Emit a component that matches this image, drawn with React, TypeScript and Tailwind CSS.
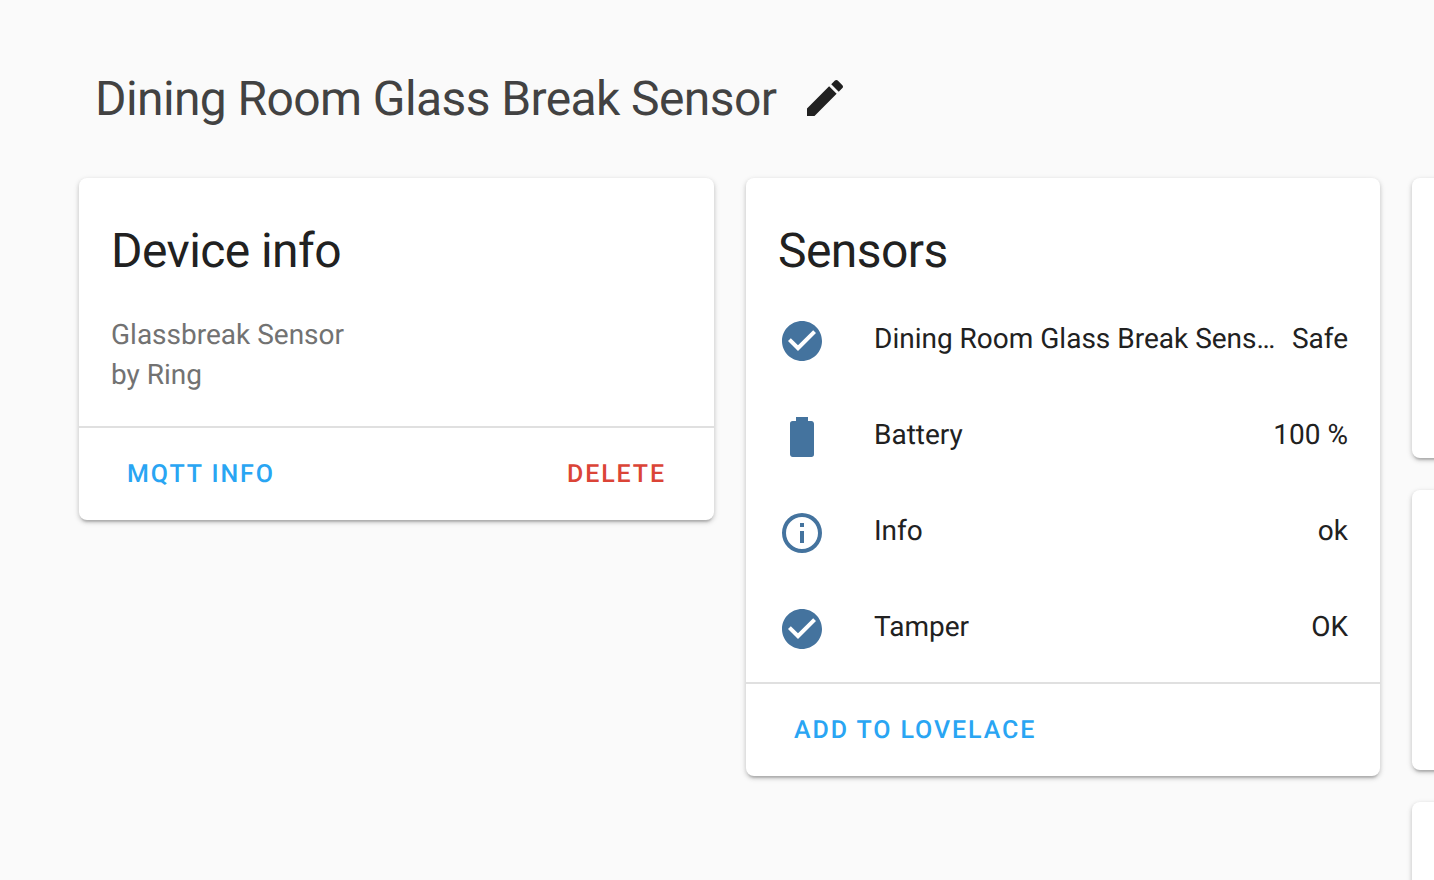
const CHECK = "M12 2C6.5 2 2 6.5 2 12S6.5 22 12 22 22 17.5 22 12 17.5 2 12 2M10 17L5 12L6.41 10.59L10 14.17L17.59 6.58L19 8L10 17Z";
const BATTERY = "M16.67,4H15V2H9V4H7.33A1.33,1.33 0 0,0 6,5.33V20.67C6,21.4 6.6,22 7.33,22H16.67A1.33,1.33 0 0,0 18,20.67V5.33C18,4.6 17.4,4 16.67,4Z";
const INFO = "M11,9H13V7H11V9M12,20C7.59,20 4,16.41 4,12C4,7.59 7.59,4 12,4C16.41,4 20,7.59 20,12C20,16.41 16.41,20 12,20M12,2A10,10 0 0,0 2,12A10,10 0 0,0 12,22A10,10 0 0,0 22,12A10,10 0 0,0 12,2M11,17H13V11H11V17Z";
const PENCIL = "M20.71,7.04C21.1,6.65 21.1,6 20.71,5.63L18.37,3.29C18,2.9 17.35,2.9 16.96,3.29L15.12,5.12L18.87,8.87M3,17.25V21H6.75L17.81,9.93L14.06,6.18L3,17.25Z";

const cardClass = "bg-white rounded-lg shadow-[0_4px_2px_-2px_rgba(0,0,0,0.14),0_2px_4px_0_rgba(0,0,0,0.14),0_2px_6px_0_rgba(0,0,0,0.12)] shrink-0";

function Icon({ d, className }: { d: string; className: string }) {
  return (
    <svg viewBox="0 0 24 24" className={className} fill="currentColor">
      <path d={d} />
    </svg>
  );
}

function Row({ icon, name, value }: { icon: string; name: string; value: string }) {
  return (
    <div className="flex items-center h-24 pl-8 pr-8">
      <Icon d={icon} className="w-12 h-12 shrink-0 text-[#44739e] mt-1" />
      <div className="flex-1 min-w-0 ml-12 truncate text-[28px] leading-10 text-[#212121] pr-4">{name}</div>
      <div className="shrink-0 text-[28px] leading-10 text-[#212121]">{value}</div>
    </div>
  );
}

function Action({ color, children }: { color: string; children: string }) {
  return <span className={`text-[25px] font-medium tracking-[1.9px] uppercase pt-0.5 ${color}`}>{children}</span>;
}

export default function App() {
  return (
    <div className="w-[1434px] h-[880px] overflow-hidden bg-[#fafafa] font-['Roboto',sans-serif] [text-rendering:geometricPrecision]">
      <div className="flex items-center h-[178px] pl-[95px] pt-5">
        <h1 className="text-[48px] leading-[56px] tracking-[-0.6px] text-[#424242] font-normal whitespace-nowrap">Dining Room Glass Break Sensor</h1>
        <Icon d={PENCIL} className="w-12 h-12 ml-[25px] mb-0.5 text-[#212121]" />
      </div>
      <div className="flex gap-8 pl-[79px] items-start w-[1600px]">
        <div className={`${cardClass} w-[635px] h-[342px] flex flex-col`}>
          <div className="flex-1 pl-[32px]">
            <h2 className="text-[48px] leading-[64px] tracking-[-0.576px] pt-[41px] text-[#212121] font-normal">Device info</h2>
            <div className="mt-8 text-[28px] leading-10 text-[#727272]">Glassbreak Sensor</div>
            <div className="text-[28px] leading-10 text-[#727272]">by Ring</div>
          </div>
          <div className="h-[94px] border-t-2 border-[#e0e0e0] flex items-center justify-between pl-12 pr-12">
            <Action color="text-[#29a5f3]">MQTT Info</Action>
            <Action color="text-[#db4437]">Delete</Action>
          </div>
        </div>
        <div className={`${cardClass} w-[634px] h-[598px] flex flex-col`}>
          <h2 className="text-[48px] leading-[64px] tracking-[-0.576px] pt-[41px] pl-[32px] text-[#212121] font-normal">Sensors</h2>
          <div className="flex-1 pt-2">
            <Row icon={CHECK} name="Dining Room Glass Break Sensor" value="Safe" />
            <Row icon={BATTERY} name="Battery" value="100 %" />
            <Row icon={INFO} name="Info" value="ok" />
            <Row icon={CHECK} name="Tamper" value="OK" />
          </div>
          <div className="h-[94px] border-t-2 border-[#e0e0e0] flex items-center pl-12">
            <Action color="text-[#29a5f3]">Add to Lovelace</Action>
          </div>
        </div>
        <div className="flex flex-col gap-8 w-[634px] shrink-0">
          <div className={`${cardClass} h-[280px]`} />
          <div className={`${cardClass} h-[280px]`} />
          <div className={`${cardClass} h-[280px]`} />
        </div>
      </div>
    </div>
  );
}
